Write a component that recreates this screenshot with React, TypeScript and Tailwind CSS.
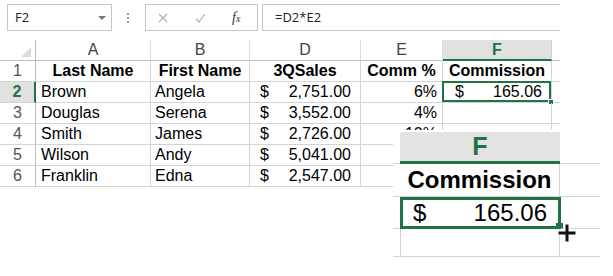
import React from 'react';

const cols = [
  { key: 'A', w: 'w-[115px]' },
  { key: 'B', w: 'w-[99px]' },
  { key: 'D', w: 'w-[111px]' },
  { key: 'E', w: 'w-[82px]' },
  { key: 'F', w: 'w-[109px]' },
];

type Row = { n: number; a: string; b: string; d: string; e: string; f: string };
const rows: Row[] = [
  { n: 2, a: 'Brown', b: 'Angela', d: '2,751.00', e: '6%', f: '165.06' },
  { n: 3, a: 'Douglas', b: 'Serena', d: '3,552.00', e: '4%', f: '' },
  { n: 4, a: 'Smith', b: 'James', d: '2,726.00', e: '10%', f: '' },
  { n: 5, a: 'Wilson', b: 'Andy', d: '5,041.00', e: '', f: '' },
  { n: 6, a: 'Franklin', b: 'Edna', d: '2,547.00', e: '', f: '' },
];

function RowHeader({ n, active }: { n: number; active?: boolean }) {
  return active ? (
    <div className="flex h-full w-[36px] items-center justify-center border-b border-r-2 border-b-[#d4d4d4] border-r-[#217346] bg-[#e1e1e1] text-[16px] font-bold text-[#217346]">
      {n}
    </div>
  ) : (
    <div className="flex h-full w-[36px] items-center justify-center border-b border-r border-b-[#d4d4d4] border-r-[#bdbdbd] text-[16px] text-[#555]">
      {n}
    </div>
  );
}

export default function App() {
  return (
    <div className="relative h-[276px] w-[613px] overflow-hidden bg-white font-['Liberation_Sans',Arial,sans-serif] text-black">
      {/* Formula bar */}
      <div className="flex h-[40px] items-start pl-[7px] pt-[4px]">
        <div className="flex h-[27px] w-[105px] items-center justify-between border border-[#c6c6c6] pl-[7px] pr-[5px] font-['Open_Sans',sans-serif] text-[13px] text-[#222]">
          <span>F2</span>
          <svg width="8" height="4" viewBox="0 0 8 4">
            <path d="M0 0h8L4 4z" fill="#777" />
          </svg>
        </div>
        <div className="flex h-[27px] w-[33px] flex-col items-center justify-center gap-[2px] pr-[1px]">
          <span className="h-[2px] w-[2px] bg-[#9a9a9a]" />
          <span className="h-[2px] w-[2px] bg-[#9a9a9a]" />
          <span className="h-[2px] w-[2px] bg-[#9a9a9a]" />
        </div>
        <div className="flex h-[27px] w-[113px] items-center border border-[#c6c6c6] pl-[12px]">
          <svg width="10" height="10" viewBox="0 0 10 10">
            <path d="M1 1l8 8M9 1l-8 8" stroke="#b0b0b0" strokeWidth="1.2" />
          </svg>
          <svg className="ml-[27px]" width="11" height="10" viewBox="0 0 11 10">
            <path d="M1 5.5l3 3.5L10 1" stroke="#b0b0b0" strokeWidth="1.2" fill="none" />
          </svg>
          <span className="ml-[26px] font-['Liberation_Serif',serif] text-[14px] italic leading-none text-[#333]">
            f<span className="text-[10px]">x</span>
          </span>
        </div>
        <div className="ml-[4px] flex h-[27px] w-[298px] items-center border-y border-l border-[#c6c6c6] pl-[12px] font-['Open_Sans',sans-serif] text-[13px] text-[#222]">
          =D2*E2
        </div>
      </div>

      {/* Column headers */}
      <div className="flex h-[21px]">
        <div className="flex w-[36px] items-end justify-end border-b border-r border-[#bdbdbd] pb-[3px] pr-[4px]">
          <svg width="10" height="10" viewBox="0 0 10 10">
            <path d="M10 0V10H0z" fill="#dcdcdc" />
          </svg>
        </div>
        {cols.map((c) =>
          c.key === 'F' ? (
            <div
              key={c.key}
              className={`${c.w} flex items-center justify-center border-b-2 border-r border-b-[#217346] border-r-[#d4d4d4] bg-[#e1e1e1] text-[16px] font-bold text-[#217346]`}
            >
              F
            </div>
          ) : (
            <div
              key={c.key}
              className={`${c.w} flex items-center justify-center border-b border-r border-b-[#bdbdbd] border-r-[#dadada] text-[16px] text-[#444]`}
            >
              {c.key}
            </div>
          )
        )}
        <div className="w-[8px] border-b border-[#bdbdbd]" />
      </div>

      {/* Row 1 headers */}
      <div className="flex h-[21px]">
        <RowHeader n={1} />
        <div className="flex w-[115px] items-center justify-center border-b border-r border-[#d4d4d4] text-[16px] font-bold">Last Name</div>
        <div className="flex w-[99px] items-center justify-center border-b border-r border-[#d4d4d4] text-[16px] font-bold">First Name</div>
        <div className="flex w-[111px] items-center justify-center border-b border-r border-[#d4d4d4] text-[16px] font-bold">3QSales</div>
        <div className="flex w-[82px] items-center justify-center border-b border-r border-[#d4d4d4] text-[16px] font-bold">Comm %</div>
        <div className="flex w-[109px] items-center justify-center border-b border-r border-[#d4d4d4] text-[16px] font-bold">Commission</div>
        <div className="w-[8px] border-b border-[#d4d4d4]" />
      </div>

      {rows.map((r) => (
        <div key={r.n} className="flex h-[21px]">
          <RowHeader n={r.n} active={r.n === 2} />
          <div className="flex w-[115px] items-center border-b border-r border-[#d4d4d4] pl-[5px] text-[16px]">{r.a}</div>
          <div className="flex w-[99px] items-center border-b border-r border-[#d4d4d4] pl-[4px] text-[16px]">{r.b}</div>
          <div className="flex w-[111px] items-center justify-between border-b border-r border-[#d4d4d4] pl-[10px] pr-[9px] text-[16px]">
            <span>$</span>
            <span>{r.d}</span>
          </div>
          <div className="flex w-[82px] items-center justify-end border-b border-r border-[#d4d4d4] pr-[5px] text-[16px]">{r.e}</div>
          <div className="relative flex w-[109px] items-center justify-between border-b border-r border-[#d4d4d4] pl-[12px] pr-[9px] text-[16px]">
            {r.f && (
              <>
                <span>$</span>
                <span>{r.f}</span>
                <div className="absolute -left-[1px] -top-[1px] bottom-0 right-0 border-2 border-[#217346]" />
                <div className="absolute -bottom-[3px] -right-[3px] h-[6px] w-[6px] border border-white bg-[#217346]" />
              </>
            )}
          </div>
          <div className="w-[8px] border-b border-[#d4d4d4]" />
        </div>
      ))}

      {/* Zoomed overlay */}
      <div className="absolute left-[393px] top-[130px] h-[146px] w-[220px] bg-white pt-[2px]">
        <div className="flex h-[32px]">
          <div className="w-[7px] border-b border-[#d4d4d4]" />
          <div className="flex w-[160px] items-center justify-center border-b-[3px] border-[#217346] bg-[#e3e3e3] text-[25px] font-bold text-[#217346]">
            F
          </div>
          <div className="w-[40px] border-b border-[#d4d4d4]" />
        </div>
        <div className="flex h-[33px]">
          <div className="w-[7px] border-b border-[#d4d4d4]" />
          <div className="flex w-[160px] items-center justify-center border-b border-r border-[#d4d4d4] text-[24px] font-bold">
            Commission
          </div>
          <div className="w-[40px] border-b border-[#d4d4d4]" />
        </div>
        <div className="flex h-[32px]">
          <div className="w-[7px] border-b border-[#d4d4d4]" />
          <div className="relative flex w-[161px] items-center justify-between border-[3px] border-[#217346] pl-[10px] pr-[11px] text-[24px]">
            <span>$</span>
            <span>165.06</span>
          </div>
          <div className="w-[39px] border-b border-[#d4d4d4]" />
        </div>
        <div className="flex h-[28px]">
          <div className="w-[7px] border-b border-[#d4d4d4]" />
          <div className="w-[160px] border-b border-l border-r border-[#d4d4d4]" />
          <div className="w-[40px] border-b border-[#d4d4d4]" />
        </div>
        <div className="absolute left-[163px] top-[93px] h-[5px] w-[7px] bg-[#217346]" />
        <svg className="absolute left-[163px] top-[92px]" width="22" height="22" viewBox="0 0 22 22">
          <path d="M11 2v18M2 11h18" stroke="#fff" strokeWidth="5" />
          <path d="M11 2.5v17M2.5 11h17" stroke="#111" strokeWidth="3" />
        </svg>
      </div>
    </div>
  );
}
